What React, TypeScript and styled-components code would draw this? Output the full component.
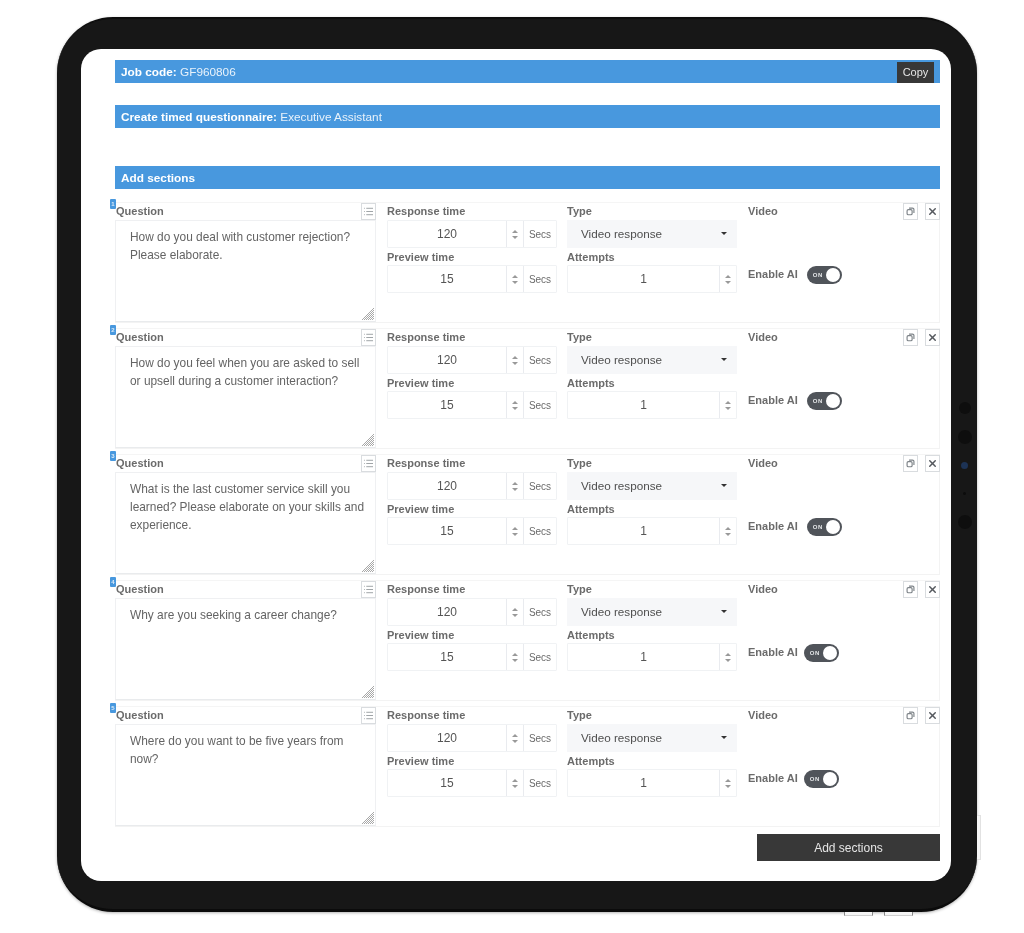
import * as React from "react"
import styled, { createGlobalStyle } from "styled-components"
import { List, X } from "lucide-react"

interface questionInterface {
  text: string
  toggleGap: number
}

const questions: questionInterface[] = [
  { text: "How do you deal with customer rejection? Please elaborate.", toggleGap: 9 },
  { text: "How do you feel when you are asked to sell or upsell during a customer interaction?", toggleGap: 9 },
  { text: "What is the last customer service skill you learned? Please elaborate on your skills and experience.", toggleGap: 9 },
  { text: "Why are you seeking a career change?", toggleGap: 6 },
  { text: "Where do you want to be five years from now?", toggleGap: 6 },
]

const sensors = [
  { size: 12, color: "#0e0e0e" },
  { size: 14, color: "#0e0e0e" },
  { size: 7, color: "#1d3355" },
  { size: 3, color: "#0c0c0c" },
  { size: 14, color: "#0e0e0e" },
]

const Spinner = () => (
  <SpinnerBox>
    <ArrowUp />
    <ArrowDown />
  </SpinnerBox>
)

const App = () => {
  return (
    <Page>
      <GlobalStyle />
      <Tablet>
        <SideSensors>
          {sensors.map((sensor, i) => (
            <Sensor key={i} $size={sensor.size} $color={sensor.color} />
          ))}
        </SideSensors>
        <SideButton />
        <BottomButtons>
          <BottomButton />
          <BottomButton />
        </BottomButtons>
        <Screen>
          <Bar $after={22}>
            <BarText>
              <b>Job code:</b> GF960806
            </BarText>
            <CopyButton>Copy</CopyButton>
          </Bar>
          <Bar $after={38}>
            <BarText>
              <b>Create timed questionnaire:</b> Executive Assistant
            </BarText>
          </Bar>
          <Bar $after={13}>
            <BarText>
              <b>Add sections</b>
            </BarText>
          </Bar>
          <Rows>
            {questions.map((question, i) => (
              <Row key={i}>
                <Badge>{i + 1}</Badge>
                <QuestionColumn>
                  <LabelRow>
                    <QuestionLabel>Question</QuestionLabel>
                    <IconButton>
                      <List size={11} strokeWidth={1.6} color="#7d8388" />
                    </IconButton>
                  </LabelRow>
                  <QuestionText>
                    {question.text}
                    <Grip viewBox="0 0 12 12">
                      <path
                        d="M0 12 12 0M2 12 12 2M4 12 12 4M6 12 12 6M8 12 12 8M10 12 12 10"
                        stroke="#a8a8a8"
                        strokeWidth="1"
                        fill="none"
                      />
                    </Grip>
                  </QuestionText>
                </QuestionColumn>
                <FieldColumn>
                  <Label>Response time</Label>
                  <FieldRow>
                    <NumberValue>120</NumberValue>
                    <Spinner />
                    <Unit>Secs</Unit>
                  </FieldRow>
                  <LowerLabel>Preview time</LowerLabel>
                  <FieldRow>
                    <NumberValue>15</NumberValue>
                    <Spinner />
                    <Unit>Secs</Unit>
                  </FieldRow>
                </FieldColumn>
                <FieldColumn>
                  <Label>Type</Label>
                  <SelectBox>
                    Video response
                    <Caret />
                  </SelectBox>
                  <LowerLabel>Attempts</LowerLabel>
                  <FieldRow>
                    <NumberValue>1</NumberValue>
                    <Spinner />
                  </FieldRow>
                </FieldColumn>
                <VideoColumn>
                  <LabelRow>
                    <Label>Video</Label>
                    <IconGroup>
                      <IconButton>
                        <CopyGlyph viewBox="0 0 10 10">
                          <rect x="1.2" y="3" width="5.6" height="5.6" rx="1.4" />
                          <path d="M3.4 1.2h3.8a1.6 1.6 0 0 1 1.6 1.6v3.8" />
                        </CopyGlyph>
                      </IconButton>
                      <IconButton>
                        <X size={11} strokeWidth={3.2} color="#55595e" />
                      </IconButton>
                    </IconGroup>
                  </LabelRow>
                  <EnableRow $gap={question.toggleGap}>
                    <Label>Enable AI</Label>
                    <Toggle>
                      <ToggleText>ON</ToggleText>
                      <Knob />
                    </Toggle>
                  </EnableRow>
                </VideoColumn>
              </Row>
            ))}
          </Rows>
          <Footer>
            <AddButton>Add sections</AddButton>
          </Footer>
        </Screen>
      </Tablet>
    </Page>
  )
}

const GlobalStyle = createGlobalStyle`
  html, body {
    margin: 0;
    padding: 0;
    background: #fff;
  }
  * {
    box-sizing: border-box;
  }
`

const Page = styled.div`
  width: 1024px;
  height: 933px;
  padding: 17px 0 0 57px;
  overflow: hidden;
  background: #fff;
  font-family: "Liberation Sans", Arial, sans-serif;
`

const Tablet = styled.div`
  position: relative;
  width: 920px;
  height: 895px;
  padding: 32px 26px 26px 24px;
  background: #171717;
  border-radius: 56px;
  border-top: 2px solid #0d0d0d;
  border-bottom: 3px solid #0b0b0b;
  box-shadow: 0 1px 3px rgba(0, 0, 0, 0.3);
  filter: blur(0.7px);
`

const SideSensors = styled.div`
  position: absolute;
  top: 375px;
  right: 5px;
  width: 15px;
  display: grid;
  grid-auto-rows: 28.5px;
  place-items: center;
`

const Sensor = styled.span<{ $size: number; $color: string }>`
  display: block;
  width: ${(props) => props.$size}px;
  height: ${(props) => props.$size}px;
  border-radius: 50%;
  background: ${(props) => props.$color};
`

const SideButton = styled.span`
  position: absolute;
  top: 796px;
  right: -4px;
  width: 4px;
  height: 45px;
  background: #f6f6f6;
  border: 1px solid #e2e2e2;
  border-left: none;
`

const BottomButtons = styled.div`
  position: absolute;
  bottom: -7px;
  left: 787px;
  display: flex;
  gap: 11px;
`

const BottomButton = styled.span`
  display: block;
  width: 29px;
  height: 4px;
  background: #f4f4f4;
  border-bottom: 1px solid #cfcfcf;
  border-left: 1px solid #888;
  border-right: 1px solid #888;
`

const Screen = styled.div`
  height: 100%;
  margin-top: -2px;
  padding: 11px 11px 0 34px;
  background: #fff;
  border-radius: 20px;
  overflow: hidden;
`

const Bar = styled.div<{ $after: number }>`
  height: 23px;
  margin-bottom: ${(props) => props.$after}px;
  padding: 1px 6px 0 6px;
  display: flex;
  align-items: center;
  justify-content: space-between;
  background: #4898de;
`

const BarText = styled.div`
  font-size: 11.8px;
  color: #e8f2fb;
  b {
    color: #fff;
  }
`

const CopyButton = styled.div`
  width: 37px;
  height: 21px;
  display: flex;
  align-items: center;
  justify-content: center;
  background: #383838;
  color: #e6e6e6;
  font-size: 11px;
`

const Rows = styled.div`
  display: flex;
  flex-direction: column;
  gap: 5px;
`

const Row = styled.div`
  position: relative;
  height: 121px;
  display: grid;
  grid-template-columns: 262px 170px 170px 1fr;
  column-gap: 10px;
  border-top: 1px solid #f5f5f5;
  border-right: 1px solid #f3f3f3;
  border-bottom: 1px solid #f3f3f3;
`

const Badge = styled.span`
  position: absolute;
  top: -4px;
  left: -5px;
  width: 6px;
  height: 10px;
  display: flex;
  align-items: center;
  justify-content: center;
  background: #4898de;
  color: #dcebf8;
  font-size: 6px;
  font-weight: bold;
  border-radius: 1px;
`

const QuestionColumn = styled.div`
  display: flex;
  flex-direction: column;
  padding-right: 1px;
`

const LabelRow = styled.div`
  height: 17px;
  display: flex;
  align-items: flex-start;
  justify-content: space-between;
`

const Label = styled.div`
  height: 17px;
  line-height: 17px;
  font-size: 11px;
  font-weight: bold;
  color: #6b6b6b;
  white-space: nowrap;
`

const QuestionLabel = styled(Label)`
  padding-left: 1px;
`

const LowerLabel = styled(Label)`
  line-height: 19px;
`

const IconButton = styled.div`
  width: 15px;
  height: 17px;
  display: flex;
  align-items: center;
  justify-content: center;
  background: #fff;
  border: 1px solid #d9dcdf;
`

const QuestionText = styled.div`
  position: relative;
  flex: 1;
  padding: 7px 8px 7px 14px;
  border: 1px solid #eff0f2;
  border-bottom: 1px solid #e9ebed;
  font-size: 11.9px;
  line-height: 18px;
  color: #646464;
`

const Grip = styled.svg`
  position: absolute;
  right: 1px;
  bottom: 1px;
  width: 12px;
  height: 12px;
`

const FieldColumn = styled.div`
  display: flex;
  flex-direction: column;
`

const FieldRow = styled.div`
  height: 28px;
  display: flex;
  border: 1px solid #f0f2f4;
  border-radius: 1px;
`

const NumberValue = styled.div`
  flex: 1;
  display: flex;
  align-items: center;
  justify-content: center;
  font-size: 12px;
  color: #555;
`

const SpinnerBox = styled.div`
  width: 17px;
  display: flex;
  flex-direction: column;
  align-items: center;
  justify-content: center;
  gap: 3px;
  border-left: 1px solid #e9ebef;
`

const ArrowUp = styled.span`
  width: 0;
  height: 0;
  border-left: 3px solid transparent;
  border-right: 3px solid transparent;
  border-bottom: 3px solid #999;
`

const ArrowDown = styled.span`
  width: 0;
  height: 0;
  border-left: 3px solid transparent;
  border-right: 3px solid transparent;
  border-top: 3px solid #999;
`

const Unit = styled.div`
  width: 33px;
  display: flex;
  align-items: center;
  justify-content: center;
  border-left: 1px solid #e9ebef;
  font-size: 10px;
  color: #6b6b6b;
`

const SelectBox = styled.div`
  height: 28px;
  padding: 0 10px 1px 14px;
  display: flex;
  align-items: center;
  justify-content: space-between;
  background: #f6f7f9;
  font-size: 11.7px;
  color: #4f4f4f;
`

const Caret = styled.span`
  width: 0;
  height: 0;
  border-left: 3px solid transparent;
  border-right: 3px solid transparent;
  border-top: 3px solid #333;
`

const VideoColumn = styled.div`
  display: flex;
  flex-direction: column;
  margin-left: 1px;
`

const IconGroup = styled.div`
  display: flex;
  gap: 7px;
  margin-right: -1px;
`

const CopyGlyph = styled.svg`
  width: 9px;
  height: 9px;
  fill: none;
  stroke: #7d8388;
  stroke-width: 1.3;
`

const EnableRow = styled.div<{ $gap: number }>`
  margin-top: 46px;
  display: flex;
  align-items: flex-start;
  gap: ${(props) => props.$gap}px;
`

const Toggle = styled.div`
  position: relative;
  width: 35px;
  height: 18px;
  padding-left: 6px;
  display: flex;
  align-items: center;
  background: #50545a;
  border-radius: 9px;
`

const ToggleText = styled.span`
  font-size: 6px;
  font-weight: bold;
  letter-spacing: 0.5px;
  color: #e4e6e8;
`

const Knob = styled.span`
  position: absolute;
  top: 2px;
  right: 2px;
  width: 14px;
  height: 14px;
  background: #fff;
  border-radius: 50%;
`

const Footer = styled.div`
  margin-top: 7px;
  display: flex;
  justify-content: flex-end;
`

const AddButton = styled.div`
  width: 183px;
  height: 27px;
  display: flex;
  align-items: center;
  justify-content: center;
  background: #383838;
  color: #e6e6e6;
  font-size: 12px;
`

export default App
